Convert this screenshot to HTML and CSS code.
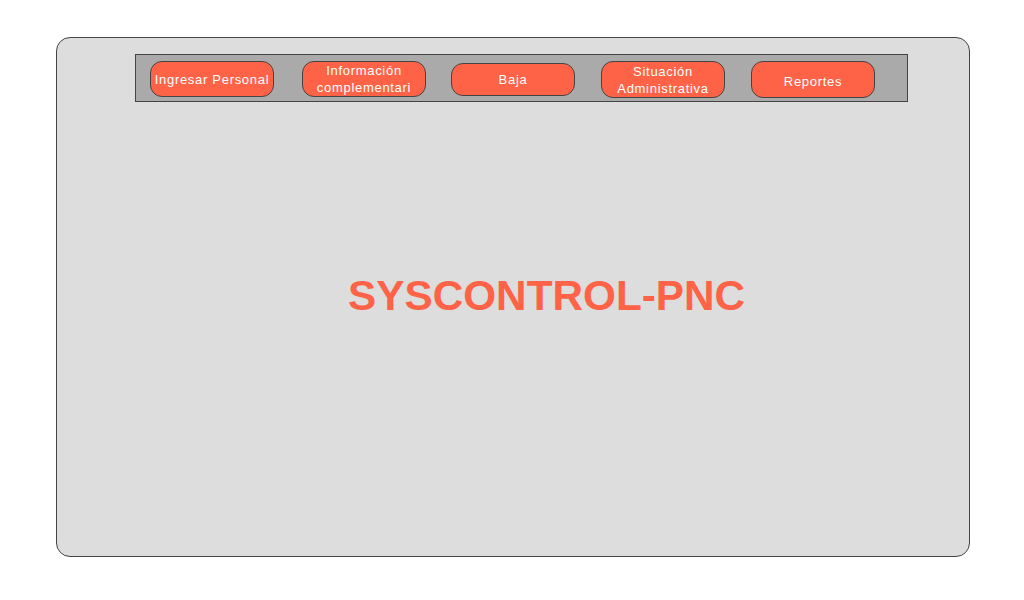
FILE: index.html
```html
<!DOCTYPE html>
<html lang="es">
<head>
<meta charset="utf-8">
<title>SYSCONTROL-PNC</title>
<link rel="stylesheet" href="styles.css">
</head>
<body>
<div class="panel">
  <nav class="menu">
    <button class="btn">Ingresar Personal</button>
    <button class="btn btn-info">Información complementari</button>
    <button class="btn btn-short">Baja</button>
    <button class="btn btn-tall">Situación Administrativa</button>
    <button class="btn btn-tall btn-low">Reportes</button>
  </nav>
  <h1 class="title">SYSCONTROL-PNC</h1>
</div>
</body>
</html>
```
FILE: styles.css
```css
html, body {
  margin: 0;
  padding: 0;
  background: #ffffff;
}
body {
  padding: 37px 0 0 56px;
  font-family: "Liberation Sans", Arial, sans-serif;
}
.panel {
  box-sizing: border-box;
  width: 914px;
  height: 520px;
  background: #dddddd;
  border: 1px solid #444444;
  border-radius: 14px;
  padding: 16px 0 0 78px;
}
.menu {
  box-sizing: border-box;
  width: 773px;
  height: 48px;
  background: #aaaaaa;
  border: 1px solid #444444;
  display: flex;
  align-items: flex-start;
  gap: 26px;
  padding: 6px 0 0 14px;
}
.btn {
  box-sizing: border-box;
  width: 124px;
  height: 36px;
  margin: 0;
  padding: 0 1px;
  background: #ff6347;
  border: 1px solid #444444;
  border-radius: 12px;
  color: #ffffff;
  font-family: "Liberation Sans", Arial, sans-serif;
  font-size: 13px;
  letter-spacing: 0.7px;
  line-height: 17px;
  text-align: center;
  white-space: normal;
}
.btn-info {
  margin-left: 2px;
  margin-right: -1px;
}
.btn-short {
  height: 33px;
  margin-top: 2px;
}
.btn-tall {
  height: 37px;
}
.btn-low {
  padding-top: 3px;
}
.title {
  margin: 170px 0 0 213px;
  color: #ff6347;
  font-size: 42.3px;
  font-weight: bold;
  line-height: 48px;
}
```
